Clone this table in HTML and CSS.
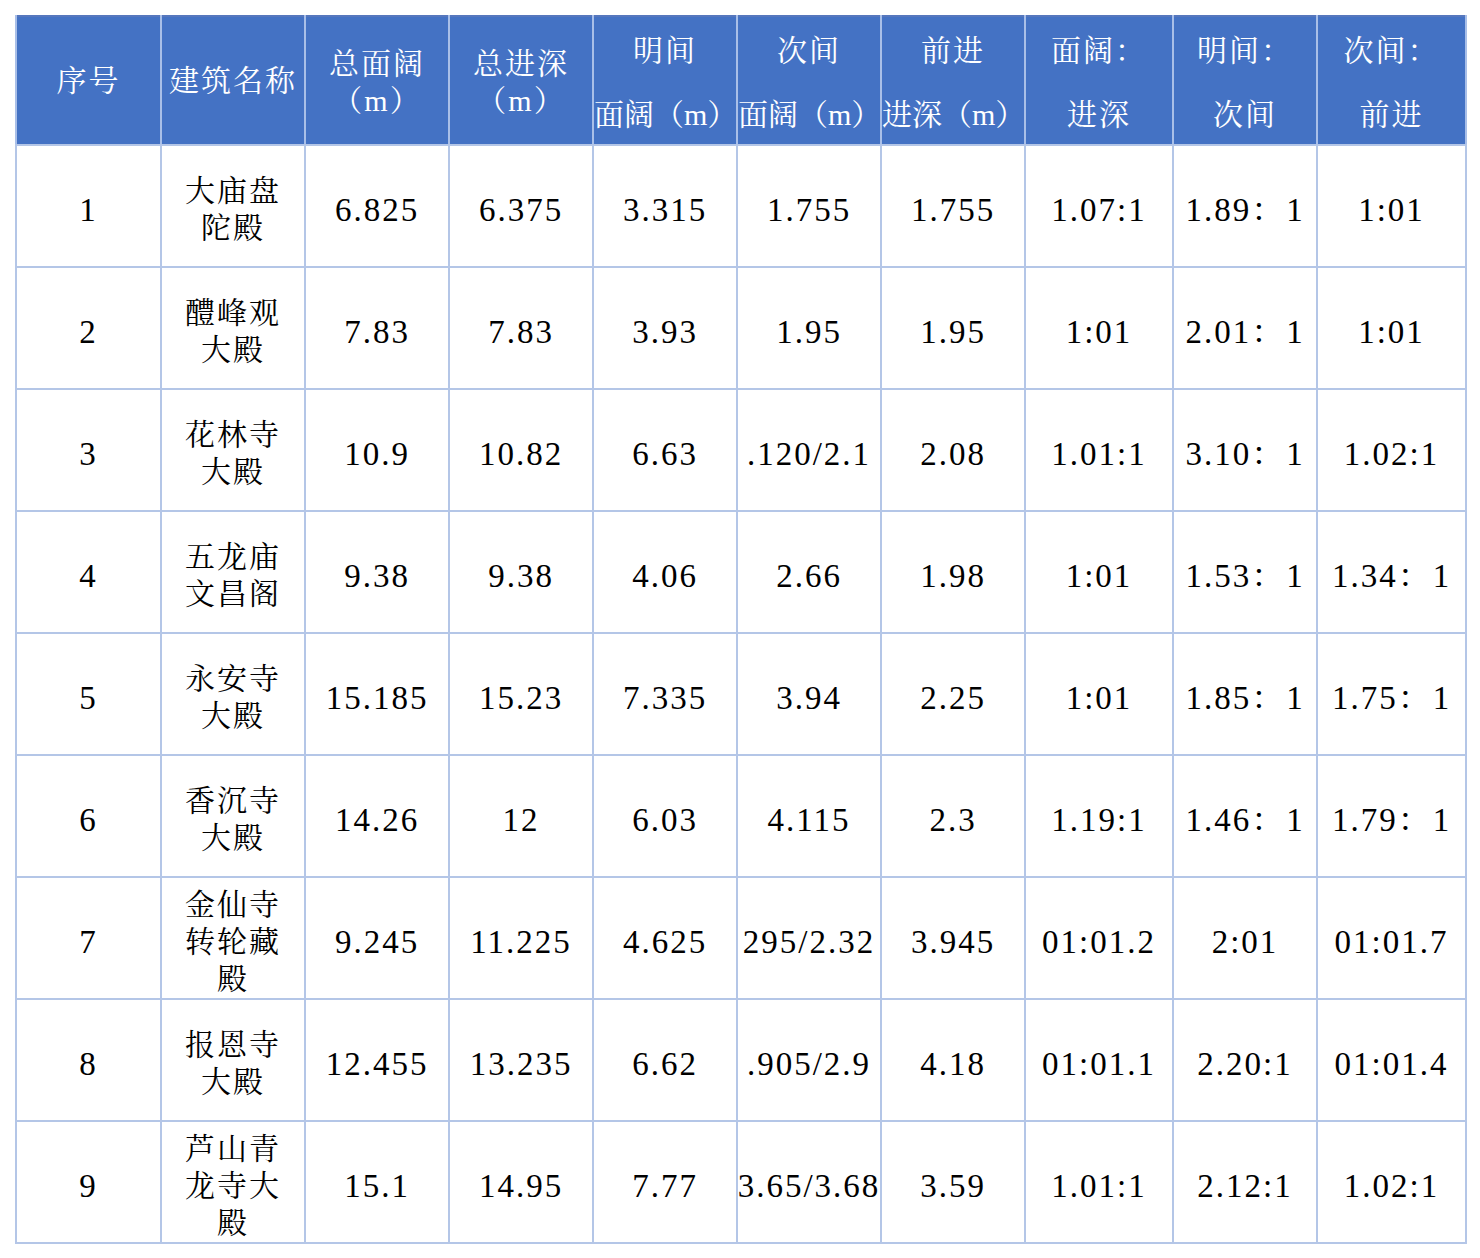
FILE: index.html
```html
<!DOCTYPE html>
<html lang="zh-CN">
<head>
<meta charset="utf-8">
<title>建筑尺度比例表</title>
<link rel="stylesheet" href="styles.css">
</head>
<body>
<table class="tbl">
  <colgroup>
    <col class="w145"><col class="w144"><col class="w144"><col class="w144"><col class="w144">
    <col class="w144"><col class="w144"><col class="w148"><col class="w144"><col class="w149">
  </colgroup>
  <thead>
    <tr>
      <th>序号</th>
      <th>建筑名称</th>
      <th><div class="stack">总面阔<br>（m）</div></th>
      <th><div class="stack">总进深<br>（m）</div></th>
      <th><div class="two"><span>明间</span><span class="ov">面阔（m）</span></div></th>
      <th><div class="two"><span>次间</span><span class="ov">面阔（m）</span></div></th>
      <th><div class="two"><span>前进</span><span class="ov">进深（m）</span></div></th>
      <th><div class="two"><span>面阔：</span><span>进深</span></div></th>
      <th><div class="two"><span>明间：</span><span>次间</span></div></th>
      <th><div class="two"><span>次间：</span><span>前进</span></div></th>
    </tr>
  </thead>
  <tbody>
    <tr>
      <td class="num">1</td><td class="name"><div>大庙盘陀殿</div></td>
      <td class="num">6.825</td><td class="num">6.375</td><td class="num">3.315</td><td class="num">1.755</td><td class="num">1.755</td>
      <td class="num">1.07:1</td><td class="num">1.89：1</td><td class="num">1:01</td>
    </tr>
    <tr>
      <td class="num">2</td><td class="name"><div>醴峰观大殿</div></td>
      <td class="num">7.83</td><td class="num">7.83</td><td class="num">3.93</td><td class="num">1.95</td><td class="num">1.95</td>
      <td class="num">1:01</td><td class="num">2.01：1</td><td class="num">1:01</td>
    </tr>
    <tr>
      <td class="num">3</td><td class="name"><div>花林寺大殿</div></td>
      <td class="num">10.9</td><td class="num">10.82</td><td class="num">6.63</td><td class="num"><div class="clip">.120/2.1</div></td><td class="num">2.08</td>
      <td class="num">1.01:1</td><td class="num">3.10：1</td><td class="num">1.02:1</td>
    </tr>
    <tr>
      <td class="num">4</td><td class="name"><div>五龙庙文昌阁</div></td>
      <td class="num">9.38</td><td class="num">9.38</td><td class="num">4.06</td><td class="num">2.66</td><td class="num">1.98</td>
      <td class="num">1:01</td><td class="num">1.53：1</td><td class="num">1.34：1</td>
    </tr>
    <tr>
      <td class="num">5</td><td class="name"><div>永安寺大殿</div></td>
      <td class="num">15.185</td><td class="num">15.23</td><td class="num">7.335</td><td class="num">3.94</td><td class="num">2.25</td>
      <td class="num">1:01</td><td class="num">1.85：1</td><td class="num">1.75：1</td>
    </tr>
    <tr>
      <td class="num">6</td><td class="name"><div>香沉寺大殿</div></td>
      <td class="num">14.26</td><td class="num">12</td><td class="num">6.03</td><td class="num">4.115</td><td class="num">2.3</td>
      <td class="num">1.19:1</td><td class="num">1.46：1</td><td class="num">1.79：1</td>
    </tr>
    <tr>
      <td class="num">7</td><td class="name"><div>金仙寺转轮藏殿</div></td>
      <td class="num">9.245</td><td class="num">11.225</td><td class="num">4.625</td><td class="num"><div class="clip">295/2.32</div></td><td class="num">3.945</td>
      <td class="num">01:01.2</td><td class="num">2:01</td><td class="num">01:01.7</td>
    </tr>
    <tr>
      <td class="num">8</td><td class="name"><div>报恩寺大殿</div></td>
      <td class="num">12.455</td><td class="num">13.235</td><td class="num">6.62</td><td class="num"><div class="clip">.905/2.9</div></td><td class="num">4.18</td>
      <td class="num">01:01.1</td><td class="num">2.20:1</td><td class="num">01:01.4</td>
    </tr>
    <tr>
      <td class="num">9</td><td class="name"><div>芦山青龙寺大殿</div></td>
      <td class="num">15.1</td><td class="num">14.95</td><td class="num">7.77</td><td class="num"><div class="clip">3.65/3.68</div></td><td class="num">3.59</td>
      <td class="num">1.01:1</td><td class="num">2.12:1</td><td class="num">1.02:1</td>
    </tr>
  </tbody>
</table>
</body>
</html>
```
FILE: styles.css
```css
html, body {
  margin: 0;
  padding: 0;
  background: #ffffff;
}

body {
  padding: 15px 0 0 15px;
}

.tbl {
  border-collapse: collapse;
  table-layout: fixed;
  width: 1450px;
  border: 2px solid #5677bd;
  font-family: "Liberation Serif", "Noto Serif CJK SC", "Noto Sans CJK SC", serif;
  color: #000000;
}

.w145 { width: 145px; }
.w144 { width: 144px; }
.w148 { width: 148px; }
.w149 { width: 149px; }

.tbl th,
.tbl td {
  padding: 0;
  text-align: center;
  vertical-align: middle;
  overflow: hidden;
}

.tbl th {
  height: 127px;
  background: #4472c4;
  color: #ffffff;
  font-weight: normal;
  font-size: 30px;
  letter-spacing: 2px;
  line-height: 37px;
  border-left: 2px solid #a9bfe8;
  border-right: 2px solid #a9bfe8;
  border-bottom: 2px solid #b4c6e7;
  white-space: nowrap;
}

.tbl td {
  height: 112px;
  border: 2px solid #b4c6e7;
  background: #ffffff;
}

.stack {
  line-height: 37px;
  position: relative;
  top: 1px;
}

.two {
  display: flex;
  flex-direction: column;
  justify-content: space-between;
  height: 101px;
  margin-top: 4px;
}

.two span {
  display: block;
  text-align: center;
}

.two .ov {
  text-align: left;
  white-space: nowrap;
  letter-spacing: 0;
}

.num {
  font-size: 33px;
  line-height: 37px;
  letter-spacing: 2px;
  white-space: nowrap;
}

.tbl td.num {
  padding-top: 8px;
}

.clip {
  display: flex;
  justify-content: center;
  white-space: nowrap;
}

.name div {
  width: 100px;
  margin: 0 auto;
  font-size: 30px;
  letter-spacing: 2px;
  line-height: 37px;
  padding-top: 6px;
}
```
